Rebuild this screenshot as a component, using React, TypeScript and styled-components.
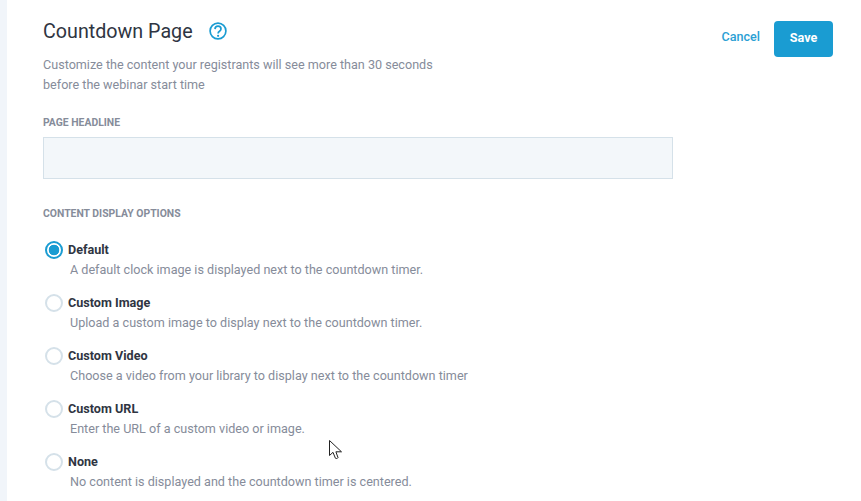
import React from "react";
import styled, { createGlobalStyle } from "styled-components";

const options = [
  { title: "Default", text: "A default clock image is displayed next to the countdown timer.", checked: true },
  { title: "Custom Image", text: "Upload a custom image to display next to the countdown timer.", checked: false },
  { title: "Custom Video", text: "Choose a video from your library to display next to the countdown timer", checked: false },
  { title: "Custom URL", text: "Enter the URL of a custom video or image.", checked: false },
  { title: "None", text: "No content is displayed and the countdown timer is centered.", checked: false },
];

export default function App() {
  return (
    <>
      <GlobalStyle />
      <Page>
        <Rail />
        <Content>
          <Header>
            <div>
              <TitleRow>
                <Title>Countdown Page</Title>
                <HelpIcon />
              </TitleRow>
              <Intro>
                Customize the content your registrants will see more than 30 seconds
                <br />
                before the webinar start time
              </Intro>
            </div>
            <Actions>
              <CancelLink>Cancel</CancelLink>
              <SaveButton>Save</SaveButton>
            </Actions>
          </Header>

          <SectionLabel>PAGE HEADLINE</SectionLabel>
          <HeadlineInput />

          <OptionsLabel>CONTENT DISPLAY OPTIONS</OptionsLabel>
          <OptionList>
            {options.map((option) => (
              <Option key={option.title}>
                <Radio $checked={option.checked} />
                <OptionBody>
                  <OptionTitle>{option.title}</OptionTitle>
                  <OptionText>{option.text}</OptionText>
                </OptionBody>
              </Option>
            ))}
          </OptionList>
        </Content>
        <Cursor />
      </Page>
    </>
  );
}

const HelpIcon = () => (
  <svg width="18" height="18" viewBox="0 0 18 18" fill="none">
    <circle cx="9" cy="9" r="7.9" stroke="#1a9cd2" strokeWidth="1.7" />
    <path
      d="M6 7.1C6.1 5.3 7.4 4.2 9 4.2c1.8 0 3 1.2 3 2.7 0 1.2-.7 1.8-1.5 2.4-.9.6-1.4 1.1-1.4 2.2"
      stroke="#1a9cd2"
      strokeWidth="1.7"
    />
    <circle cx="9.1" cy="13.8" r="1.1" fill="#1a9cd2" />
  </svg>
);

const CursorSvg = styled.svg`
  position: absolute;
  left: 329px;
  top: 440px;
`;

const Cursor = () => (
  <CursorSvg width="14" height="20" viewBox="0 0 14 20">
    <path
      d="M0.5 0.5V15.5L4 12.3L6.4 18.2C6.7 18.9 8.7 18.5 9 17.6L6.9 11.8H12.5Z"
      fill="#fff"
      stroke="#222"
      strokeWidth="1"
    />
  </CursorSvg>
);

const GlobalStyle = createGlobalStyle`
  html, body {
    margin: 0;
    padding: 0;
    background: #fff;
    font-family: Roboto, "Liberation Sans", sans-serif;
  }
`;

const Page = styled.div`
  position: relative;
  display: flex;
  width: 861px;
  height: 501px;
  overflow: hidden;
  background: #fff;
`;

const Rail = styled.div`
  flex: 0 0 7px;
  background: #f1f5fa;
`;

const Content = styled.div`
  flex: 1;
  padding: 19px 28px 0 36px;
`;

const Header = styled.div`
  display: flex;
  justify-content: space-between;
  align-items: flex-start;
`;

const TitleRow = styled.div`
  display: flex;
  align-items: center;
  gap: 16px;
  height: 24px;
`;

const Title = styled.h1`
  margin: 2px 0 0;
  font-size: 19.7px;
  font-weight: 400;
  line-height: 24px;
  color: #2f3542;
`;

const Intro = styled.p`
  margin: 12px 0 0;
  font-size: 12.6px;
  line-height: 20px;
  color: #868c9a;
`;

const Actions = styled.div`
  display: flex;
  align-items: center;
  gap: 14px;
  margin-top: 2px;
`;

const CancelLink = styled.span`
  font-size: 12.6px;
  font-weight: 500;
  line-height: 32px;
  margin-bottom: 1px;
  color: #2b9fd4;
  align-self: flex-start;
`;

const SaveButton = styled.button`
  width: 59px;
  height: 36px;
  padding: 0 0 4px;
  border: none;
  border-radius: 4px;
  background: #1a9cd2;
  color: #fff;
  font-family: inherit;
  font-size: 12.6px;
  font-weight: 700;
`;

const SectionLabel = styled.div`
  margin-top: 21px;
  font-size: 10.4px;
  font-weight: 700;
  line-height: 14px;
  color: #868c9a;
`;

const OptionsLabel = styled(SectionLabel)`
  margin-top: 28px;
`;

const HeadlineInput = styled.div`
  box-sizing: border-box;
  width: 630px;
  height: 42px;
  margin-top: 7px;
  background: #f3f7fa;
  border: 1px solid #d5e1e9;
`;

const OptionList = styled.div`
  display: flex;
  flex-direction: column;
  gap: 13px;
  margin-top: 19px;
`;

const Option = styled.div`
  display: flex;
  gap: 5px;
  height: 40px;
`;

const Radio = styled.span<{ $checked: boolean }>`
  box-sizing: border-box;
  flex: 0 0 18px;
  width: 18px;
  height: 18px;
  margin: 1px 0 0 2px;
  border-radius: 50%;
  border: 2px solid ${({ $checked }) => ($checked ? "#1a9cd2" : "#d5e1e9")};
  background: ${({ $checked }) =>
    $checked ? "radial-gradient(circle, #1a9cd2 0 5px, #fff 5.6px)" : "#fff"};
`;

const OptionBody = styled.div`
  display: flex;
  flex-direction: column;
  gap: 1px;
`;

const OptionTitle = styled.div`
  font-size: 12.6px;
  font-weight: 700;
  line-height: 20px;
  color: #2f3542;
`;

const OptionText = styled.div`
  margin-left: 2px;
  font-size: 12.6px;
  line-height: 17px;
  color: #868c9a;
`;
